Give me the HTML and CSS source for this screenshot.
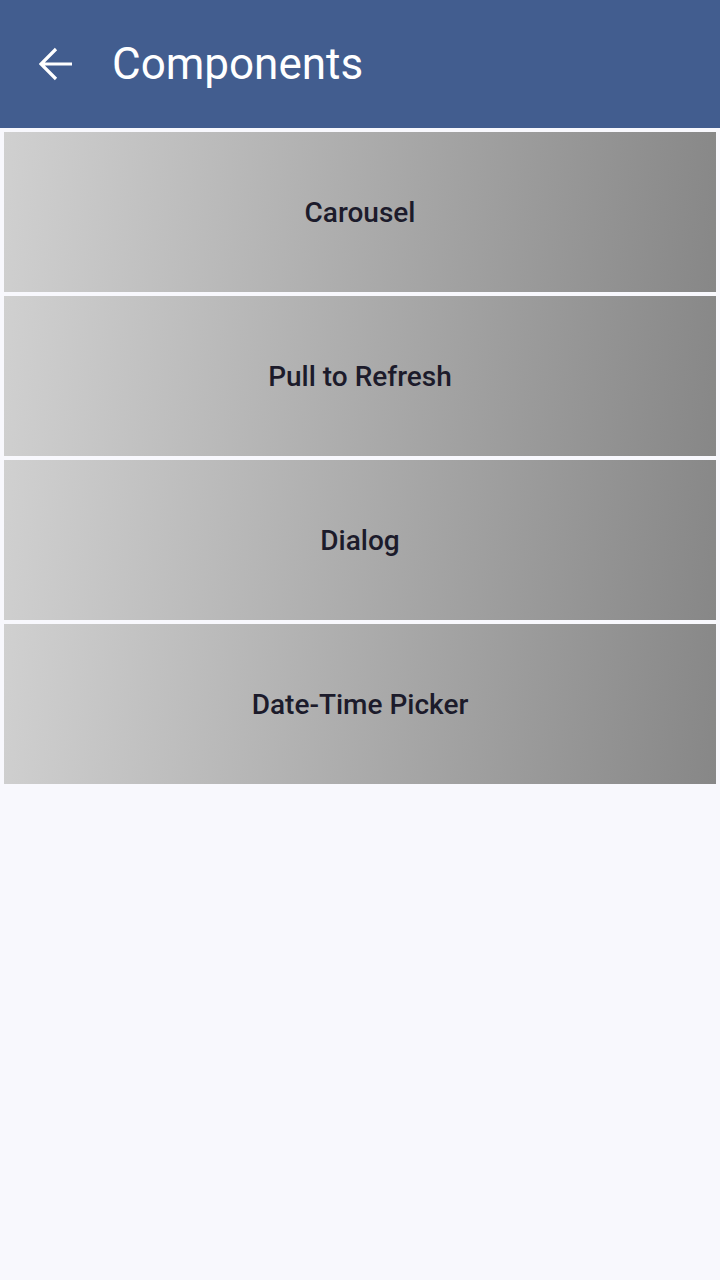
FILE: index.html
```html
<!DOCTYPE html>
<html>
<head>
<meta charset="utf-8">
<link rel="stylesheet" href="styles.css">
</head>
<body>
<header class="appbar">
  <svg class="back" width="34" height="34" viewBox="0 0 34 34"><path d="M2 17H33M17 2L2 17L17 32" fill="none" stroke="#fff" stroke-width="3.2" stroke-linecap="butt" stroke-linejoin="miter"/></svg>
  <h1 class="title">Components</h1>
</header>
<main class="list">
  <div class="item">Carousel</div>
  <div class="item">Pull to Refresh</div>
  <div class="item">Dialog</div>
  <div class="item">Date-Time Picker</div>
</main>
</body>
</html>
```
FILE: styles.css
```css
html, body {
  margin: 0;
  padding: 0;
  background: #f8f8fd;
  font-family: Roboto, "Noto Sans", sans-serif;
  width: 720px;
  height: 1280px;
}
.appbar {
  height: 128px;
  background: #425d8f;
  display: flex;
  align-items: center;
  box-sizing: border-box;
  padding-left: 39px;
}
.back {
  display: block;
  width: 34px;
  height: 34px;
}
.title {
  margin: 0 0 0 39px;
  color: #fff;
  font-size: 44px;
  font-weight: 400;
  line-height: 1;
  letter-spacing: 0;
}
.list {
  display: flex;
  flex-direction: column;
  gap: 4px;
  padding: 4px 4px 0 4px;
}
.item {
  height: 160px;
  display: flex;
  align-items: center;
  justify-content: center;
  background: linear-gradient(95deg, #d0d0d0 0%, #878787 100%);
  color: #1c1b2b;
  font-size: 28px;
  font-weight: 500;
  letter-spacing: 0;
}
```
